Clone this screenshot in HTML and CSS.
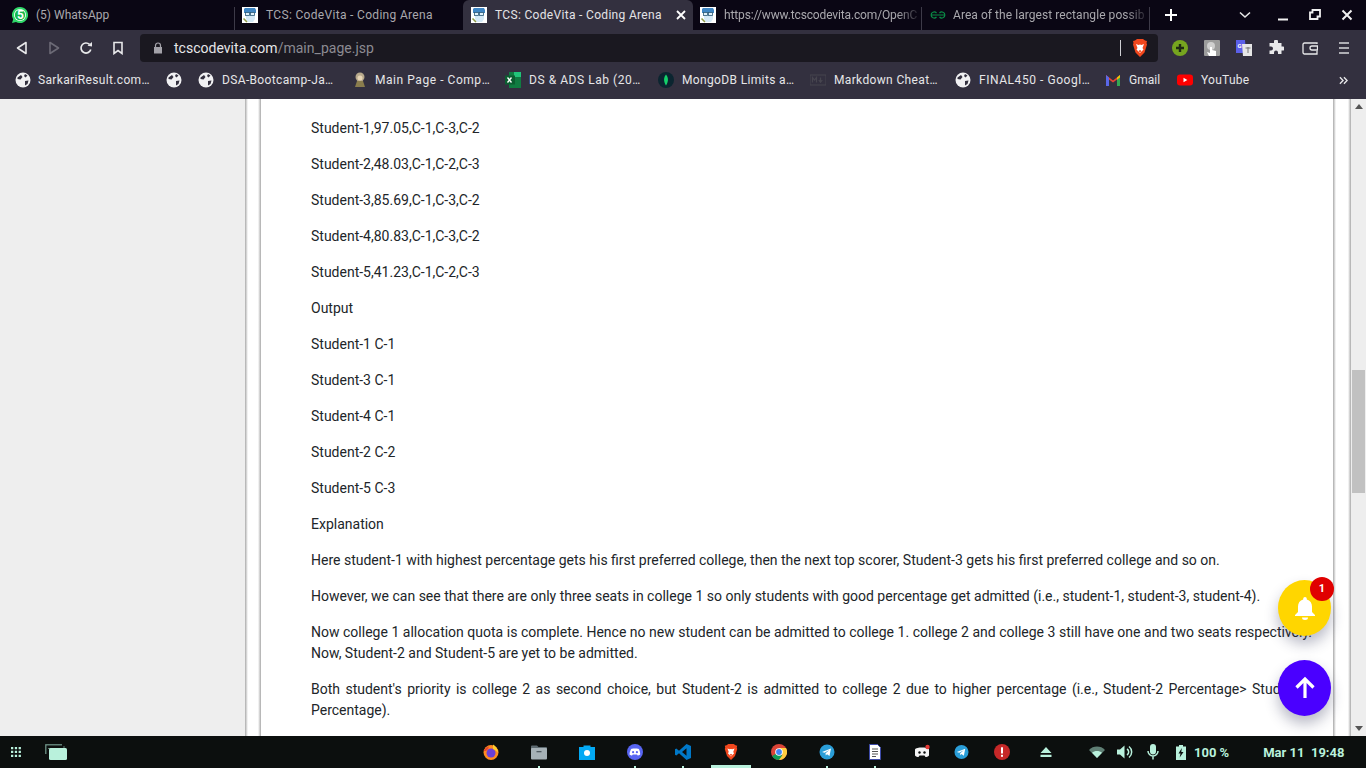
FILE: index.html
```html
<!DOCTYPE html>
<html lang="en">
<head>
<meta charset="utf-8">
<title>TCS: CodeVita - Coding Arena</title>
<link rel="stylesheet" href="styles.css">
</head>
<body>
<svg class="defs" width="0" height="0" aria-hidden="true">
  <defs>
    <symbol id="mascot" viewBox="0 0 16 16">
      <rect width="16" height="16" fill="#fff"/>
      <path d="M3 1h10l1 2v3H2V2z" fill="#3f86c4"/>
      <path d="M4 6h9v6l-2 3H6l-2-3z" fill="#d4e9f7"/>
      <rect x="3.500" y="5.500" width="4" height="3" fill="#dff0fb" stroke="#2c5a78" stroke-width=".8"/>
      <rect x="8.500" y="5.500" width="4" height="3" fill="#dff0fb" stroke="#2c5a78" stroke-width=".8"/>
      <path d="M1.500 11.500l3.500 3.500" stroke="#8d9a48" stroke-width="1.600"/>
    </symbol>
    <symbol id="globe" viewBox="0 0 16 16">
      <circle cx="8" cy="8" r="7.500" fill="#f1f1f3"/>
      <path d="M2.500 5.500L6 3l1.500 2-2 2.500-3-.5zM10 2l2.500 1.500-2 2-1.500-1.500zM10 9l3.500-.5-1 3.500-2.500 1.500z" fill="#33303f"/>
    </symbol>
  </defs>
</svg>
<div class="screen">
  <header class="browser">
    <div class="tabstrip">
      <div class="tab tab-first">
        <svg class="fav" viewBox="0 0 16 16"><path d="M8 0a8 8 0 0 0-6.800 12.200L0 16l4-1.100A8 8 0 1 0 8 0z" fill="#2fd768"/><circle cx="8" cy="8" r="6" fill="#fff"/><circle cx="8" cy="8" r="5.200" fill="#17b84f"/></svg>
        <span class="badge-num">5</span>
        <span class="tab-title">(5) WhatsApp</span>
      </div>
      <div class="tab tab-b"><svg class="fav"><use href="#mascot"/></svg><span class="tab-title tcs">TCS: CodeVita - Coding Arena</span></div>
      <div class="tab tab-active"><svg class="fav"><use href="#mascot"/></svg><span class="tab-title tcs">TCS: CodeVita - Coding Arena</span>
        <svg class="tab-x" viewBox="0 0 10 10"><path d="M1 1l8 8M9 1l-8 8" stroke="#fff" stroke-width="1.800"/></svg>
      </div>
      <div class="tab tab-c"><svg class="fav"><use href="#mascot"/></svg><span class="tab-title fade">https://www.tcscodevita.com/OpenC</span></div>
      <div class="tab tab-d">
        <svg class="fav" viewBox="0 0 16 16"><path d="M6.500 6A3 2.700 0 0 0 1.200 8H14.800A3 2.700 0 0 0 9.500 6M1.200 8A3 2.700 0 0 0 6.500 10M14.800 8A3 2.700 0 0 1 9.500 10" fill="none" stroke="#0a8a45" stroke-width="1.200"/></svg>
        <span class="tab-title fade">Area of the largest rectangle possib</span>
      </div>
      <svg class="plus" viewBox="0 0 14 14"><path d="M7 1v12M1 7h12" stroke="#fff" stroke-width="2"/></svg>
      <svg class="tabmenu" viewBox="0 0 12 8"><path d="M1 1.500l5 4.500 5-4.500" fill="none" stroke="#e6e6e6" stroke-width="1.600"/></svg>
      <div class="winbtns">
        <svg class="win" viewBox="0 0 12 12"><rect x="1" y="9.500" width="10" height="2" fill="#f0f0f0"/></svg>
        <svg class="win" viewBox="0 0 12 12"><path d="M3.500 1h7.500v6.500H8.500V10H1V3.500h2.500z" fill="none" stroke="#f0f0f0" stroke-width="1.800"/></svg>
        <svg class="win" viewBox="0 0 12 12"><path d="M1.500 1.500l9 9M10.500 1.500l-9 9" stroke="#f0f0f0" stroke-width="2"/></svg>
      </div>
    </div>
    <div class="toolbar">
      <div class="navbtns">
        <svg class="nav" viewBox="0 0 14 14"><path d="M11 1.500v11L2.500 7z" fill="none" stroke="#e8e8ea" stroke-width="1.600" stroke-linejoin="round"/></svg>
        <svg class="nav" viewBox="0 0 14 14"><path d="M3 1.500v11L11.500 7z" fill="none" stroke="#6c6a76" stroke-width="1.600" stroke-linejoin="round"/></svg>
        <svg class="nav" viewBox="0 0 14 14"><path d="M11.800 8.500A5 5 0 1 1 10.500 3.400" fill="none" stroke="#e8e8ea" stroke-width="1.700"/><path d="M8.500 4.800L13 5.500V1z" fill="#e8e8ea"/></svg>
        <svg class="nav" viewBox="0 0 14 14"><path d="M3 1.500h8v11L7 9.500l-4 3z" fill="none" stroke="#e8e8ea" stroke-width="1.600"/></svg>
      </div>
      <div class="omnibox">
        <svg class="lock" viewBox="0 0 10 12"><path d="M2.500 5V3.500a2.500 2.500 0 0 1 5 0V5" fill="none" stroke="#a3a2a9" stroke-width="1.200"/><rect x="1" y="5" width="8" height="6.500" fill="#a3a2a9"/></svg>
        <span class="url">tcscodevita.com<span class="url-path">/main_page.jsp</span></span>
        <span class="omni-sep"></span>
        <svg class="brave-s" viewBox="0 0 16 18"><path d="M3 1.500L5 0h6l2 1.500 2 .5-.5 2 .5 1.500-2.500 8L8 18l-4.500-4.500L1 5.500 1.500 4 1 2z" fill="#f1471d"/><path d="M4 5l2.500 1L8 5.500 9.500 6 12 5l-1.500 4 1 1.500L8 14l-3.500-3.500 1-1.500z" fill="#fff"/><path d="M6.500 12L8 11l1.500 1L8 13.500z" fill="#f1471d"/></svg>
      </div>
      <div class="extensions">
        <svg class="ext" viewBox="0 0 16 16"><circle cx="8" cy="8" r="8" fill="#76a51f"/><path d="M8 4v8M4 8h8" stroke="#1f2a14" stroke-width="2.400"/></svg>
        <svg class="ext" viewBox="0 0 16 16"><rect width="16" height="16" rx="1" fill="#9c9c9c"/><circle cx="7" cy="6" r="4" fill="#cfcfcf"/><path d="M6 7h2v3l4 1v5H5l-2-4 3 1z" fill="#fff"/></svg>
        <svg class="ext" viewBox="0 0 16 16"><path d="M0 0h9l1 13H0z" fill="#5b5fe8"/><path d="M6 4h10v12H7z" fill="#e6e6e6"/><text x="1.500" y="7.500" class="ext-g">G</text><path d="M9.500 8h5M12 7v6" stroke="#777" stroke-width="1"/></svg>
        <svg class="ext" viewBox="0 0 16 16"><path d="M6 1.500a2 2 0 0 1 4 0V3h3.500v3.500H15a2 2 0 0 1 0 4h-1.500V14H10v-1.500a2 2 0 0 0-4 0V14H1.500v-3.500H3a2 2 0 0 0 0-4H1.500V3H6z" fill="#e8e8ea"/></svg>
        <svg class="ext ext-shift" viewBox="0 0 16 16"><path d="M15 4V3H2.500A1.500 1.500 0 0 0 1 4.500v8A1.500 1.500 0 0 0 2.500 14H15v-3M15 6H10a2 2 0 0 0 0 4h5.500V6z" fill="none" stroke="#e8e8ea" stroke-width="1.300"/></svg>
        <svg class="ext ext-shift" viewBox="0 0 16 16"><path d="M3 3h10M3 8h10M3 13h10" stroke="#d8d8dc" stroke-width="1.500"/></svg>
      </div>
    </div>
    <nav class="bookmarks">
      <div class="bm bm-tight ls"><svg class="bm-ico"><use href="#globe"/></svg><span>SarkariResult.com…</span></div>
      <div class="bm"><svg class="bm-ico"><use href="#globe"/></svg></div>
      <div class="bm ls"><svg class="bm-ico"><use href="#globe"/></svg><span>DSA-Bootcamp-Ja…</span></div>
      <div class="bm bm-tight lx"><svg class="bm-ico" viewBox="0 0 16 16"><circle cx="8" cy="5" r="4.500" fill="#b7a98c"/><circle cx="8" cy="6" r="2.500" fill="#e8d5b5"/><path d="M3 15l2-6h6l2 6z" fill="#8a7d4d"/></svg><span>Main Page - Comp…</span></div>
      <div class="bm lx"><svg class="bm-ico" viewBox="0 0 16 16"><rect x="4" width="12" height="16" fill="#107c41"/><rect x="9" width="7" height="5" fill="#21c57a"/><rect y="3.500" width="10" height="9" fill="#0b5e30"/><path d="M2.500 5.500l4 5M6.500 5.500l-4 5" stroke="#fff" stroke-width="1.300"/></svg><span>DS &amp; ADS Lab (20…</span></div>
      <div class="bm ls"><svg class="bm-ico" viewBox="0 0 16 16"><circle cx="8" cy="8" r="8" fill="#0b2530"/><path d="M8 2.500c2.600 3 2.600 7 0 11-2.600-4-2.600-8 0-11z" fill="#14d16a"/></svg><span>MongoDB Limits a…</span></div>
      <div class="bm ls"><svg class="bm-ico" viewBox="0 0 16 16"><rect y="3" width="16" height="10" fill="none" stroke="#47454f"/><path d="M2.500 10.500v-5l2 2.500 2-2.500v5M10.500 5.500v4M8.800 8l1.700 2.300L12.300 8" fill="none" stroke="#47454f" stroke-width="1.200"/></svg><span>Markdown Cheat…</span></div>
      <div class="bm lx"><svg class="bm-ico"><use href="#globe"/></svg><span>FINAL450 - Googl…</span></div>
      <div class="bm"><svg class="bm-ico" viewBox="0 0 16 16"><path d="M1 14V3l7 5.500L15 3v11h-3V7.500L8 10.500 4 7.500V14z" fill="#ea4335"/><path d="M1 14V3l3 2.500V14z" fill="#5a68e8"/><path d="M12 14V5.500L15 3v11z" fill="#34a853"/><path d="M12 5.500L15 3v2.500l-3 2.300z" fill="#fbbc04"/></svg><span>Gmail</span></div>
      <div class="bm bm-yt"><svg class="bm-ico" viewBox="0 0 16 16"><rect y="2.500" width="16" height="11" rx="3" fill="#f00"/><path d="M6.500 5.800v4.400L10.300 8z" fill="#fff"/></svg><span>YouTube</span></div>
      <svg class="more" viewBox="0 0 10 10"><path d="M1 1.500L4.500 5 1 8.500M5.500 1.500L9 5 5.500 8.500" fill="none" stroke="#e8e8ea" stroke-width="1.500"/></svg>
    </nav>
  </header>

  <main class="viewport">
    <div class="gutter"></div>
    <div class="shell">
      <article class="sheet">
        <p>Student-1,97.05,C-1,C-3,C-2</p>
        <p>Student-2,48.03,C-1,C-2,C-3</p>
        <p>Student-3,85.69,C-1,C-3,C-2</p>
        <p>Student-4,80.83,C-1,C-3,C-2</p>
        <p>Student-5,41.23,C-1,C-2,C-3</p>
        <p>Output</p>
        <p>Student-1 C-1</p>
        <p>Student-3 C-1</p>
        <p>Student-4 C-1</p>
        <p>Student-2 C-2</p>
        <p>Student-5 C-3</p>
        <p>Explanation</p>
        <p>Here student-1 with highest percentage gets his first preferred college, then the next top scorer, Student-3 gets his first preferred college and so on.</p>
        <p>However, we can see that there are only three seats in college 1 so only students with good percentage get admitted (i.e., student-1, student-3, student-4).</p>
        <p>Now college 1 allocation quota is complete. Hence no new student can be admitted to college 1. college 2 and college 3 still have one and two seats respectively. Now, Student-2 and Student-5 are yet to be admitted.</p>
        <p>Both student's priority is college 2 as second choice, but Student-2 is admitted to college 2 due to higher percentage (i.e., Student-2 Percentage&gt; Student-5 Percentage).</p>
      </article>
    </div>
    <div class="scrollbar">
      <svg class="sb-arrow" viewBox="0 0 8 5"><path d="M4 0l4 5H0z" fill="#555"/></svg>
      <svg class="sb-arrow" viewBox="0 0 8 5"><path d="M4 5l4-5H0z" fill="#555"/></svg>
      <div class="sb-thumb"></div>
    </div>
    <div class="fab fab-bell">
      <svg class="fab-ico" viewBox="0 0 22 24"><path d="M11 1a1.800 1.800 0 0 1 1.800 1.800v.6C16.200 4.300 18 7 18 10.500V16l3 3v1H1v-1l3-3v-5.500C4 7 5.800 4.300 9.200 3.400v-.6A1.800 1.800 0 0 1 11 1z" fill="#fff"/><path d="M8 21.500h6a3 2.500 0 0 1-6 0z" fill="#fff"/></svg>
      <span class="fab-badge">1</span>
    </div>
    <div class="fab fab-up">
      <svg class="fab-ico" viewBox="0 0 22 24"><path d="M11 22V3M2.500 11.500L11 3l8.500 8.500" fill="none" stroke="#fff" stroke-width="3.200"/></svg>
    </div>
  </main>

  <footer class="taskbar">
    <div class="tb-left">
      <svg class="apps" viewBox="0 0 11 11"><path d="M0 0h2.500v2.500H0zM4.200 0h2.500v2.500H4.200zM8.400 0h2.500v2.500H8.400zM0 4.200h2.500v2.500H0zM4.200 4.200h2.500v2.500H4.200zM8.400 4.200h2.500v2.500H8.400zM0 8.400h2.500v2.500H0zM4.200 8.400h2.500v2.500H4.200zM8.400 8.400h2.500v2.500H8.400z" fill="#b9f1dc"/></svg>
      <svg class="workspace" viewBox="0 0 22 16"><path d="M.5 10V2A1.500 1.500 0 0 1 2 .5h15" fill="none" stroke="#5f7f74" stroke-width="2"/><path d="M3 4.500h16V2" fill="none" stroke="#5f7f74" stroke-width="1"/><rect x="4" y="4" width="18" height="12" rx="1.500" fill="#b9f1dc"/></svg>
    </div>
    <div class="dock">
      <div class="dock-cell"><svg class="dk" viewBox="0 0 16 16"><circle cx="8" cy="8.500" r="7.500" fill="#ff8a1f"/><circle cx="8" cy="9" r="4.500" fill="#6b3fd6"/><path d="M10 .5c3 2 5 4.500 5 8l-3-2.500-2-1z" fill="#ffcc2e"/><path d="M.8 7C2 4 4 2.500 6 2.500L5 5 3 7z" fill="#e8452c"/></svg></div>
      <div class="dock-cell dot"><svg class="dk" viewBox="0 0 16 16"><path d="M0 2.500A1 1 0 0 1 1 1.500h5L7.500 3H15a1 1 0 0 1 1 1v1H0z" fill="#5d6a70"/><rect y="4" width="16" height="11.500" rx="1" fill="#a6b1b6"/><rect x="5.500" y="7" width="5" height="1.300" fill="#4f5a60"/></svg></div>
      <div class="dock-cell"><svg class="dk" viewBox="0 0 16 16"><path d="M0 3h4.500V1.500h7V3H16v13H0z" fill="#03a9f4"/><circle cx="8" cy="9" r="3" fill="#fff"/></svg></div>
      <div class="dock-cell dot"><svg class="dk" viewBox="0 0 16 16"><circle cx="8" cy="8" r="8" fill="#5865f2"/><path d="M4 5.200C5.500 4.300 6.500 4.500 6.500 4.500h3s1 -.2 2.500 .7c1 1.800 1.200 3.800 1.200 5.300-1 .8-2 1-2.500 1l-.7-1H5.800l-.8 1c-.5 0-1.500-.2-2.500-1 0-1.500.5-3.500 1.500-5.300z" fill="#fff"/><circle cx="6.100" cy="8.200" r="1.100" fill="#5865f2"/><circle cx="9.900" cy="8.200" r="1.100" fill="#5865f2"/></svg></div>
      <div class="dock-cell dot"><svg class="dk" viewBox="0 0 16 16"><path d="M11.500 0L16 2v12l-4.500 2L4 9.300 1.300 11.500 0 10.800V5.200l1.300-.7L4 6.700zM11.500 4.300L7 8l4.500 3.700z" fill="#0078c8"/></svg></div>
      <div class="dock-cell active"><svg class="dk" viewBox="0 0 16 18"><path d="M3 1.500L5 0h6l2 1.500 2 .5-.5 2 .5 1.500-2.500 8L8 18l-4.500-4.500L1 5.500 1.500 4 1 2z" fill="#f1471d"/><path d="M4 5l2.500 1L8 5.500 9.500 6 12 5l-1.500 4 1 1.500L8 14l-3.500-3.500 1-1.500z" fill="#fff"/><path d="M6.500 12L8 11l1.500 1L8 13.500z" fill="#f1471d"/></svg></div>
      <div class="dock-cell"><svg class="dk" viewBox="0 0 16 16"><circle cx="8" cy="8" r="8" fill="#db4437"/><path d="M8 8L1.100 12A8 8 0 0 0 8 16l3.500-4z" fill="#0f9d58"/><path d="M8 4h7a8 8 0 0 1-7 12l3.500-5z" fill="#ffcd40"/><circle cx="8" cy="8" r="3.800" fill="#fff"/><circle cx="8" cy="8" r="2.900" fill="#4285f4"/></svg></div>
      <div class="dock-cell dot"><svg class="dk" viewBox="0 0 16 16"><circle cx="8" cy="8" r="7.500" fill="#2a9ed8"/><path d="M3 8l9-3.500-1.500 7.500L8 10.200 6.800 11.500 6.500 9.300l4-3.300-5 2.800z" fill="#fff"/></svg></div>
      <div class="dock-cell dot"><svg class="dk" viewBox="0 0 12 16"><path d="M.5.500h8l3 3v12H.5z" fill="#fff" stroke="#3d4aa8"/><path d="M3 5h6M3 7.500h6M3 10h6M3 12.500h4" stroke="#555" stroke-width="1"/></svg></div>
    </div>
    <div class="tray">
      <svg class="tr tr-1" viewBox="0 0 16 16"><path d="M1 5.500C1.500 4 5 3.500 8 3.500s6.500.5 7 2v6c-1 1-2.500 1.500-3.500 1.500l-1-1.500h-5L4.500 13C3.500 13 2 12.500 1 11.500z" fill="#f4f4f4"/><circle cx="5.500" cy="8.500" r="1.200" fill="#0c0f0e"/><circle cx="10.500" cy="8.500" r="1.200" fill="#0c0f0e"/><circle cx="13.500" cy="3" r="2.200" fill="#e53935"/></svg>
      <svg class="tr tr-2" viewBox="0 0 16 16"><circle cx="8" cy="8" r="7.500" fill="#2a9ed8"/><path d="M3 8l9-3.500-1.500 7.500L8 10.200 6.800 11.500 6.500 9.300l4-3.300-5 2.800z" fill="#fff"/></svg>
      <svg class="tr tr-3" viewBox="0 0 16 16"><circle cx="8" cy="8" r="8" fill="#c62828"/><rect x="7" y="3.300" width="2" height="6.200" fill="#fff"/><rect x="7" y="10.800" width="2" height="2" fill="#fff"/></svg>
      <svg class="tr tr-4" viewBox="0 0 12 12"><path d="M6 1l5.500 6H.5z M.5 8.700h11v2.300H.5z" fill="#b9f1dc"/></svg>
      <svg class="tr tr-5" viewBox="0 0 16 12"><path d="M0 4C2 1.500 5 .5 8 .5S14 1.500 16 4l-8 8z" fill="#5f7f74"/><path d="M3 6.800C4.300 5.500 6 5 8 5s3.700.5 5 1.800L8 12z" fill="#b9f1dc"/></svg>
      <svg class="tr tr-6" viewBox="0 0 16 16"><path d="M0 5.500h3L7.500 1.500v13L3 10.500H0z" fill="#b9f1dc"/><path d="M10 5a3.500 3.500 0 0 1 0 6M12 2.500a7 7 0 0 1 0 11" fill="none" stroke="#b9f1dc" stroke-width="1.500"/></svg>
      <svg class="tr tr-7" viewBox="0 0 12 16"><rect x="3" y="0" width="6" height="10.500" rx="3" fill="#b9f1dc"/><path d="M1 7a5 5 0 0 0 10 0M6 12v3.500" fill="none" stroke="#b9f1dc" stroke-width="1.500"/></svg>
      <svg class="tr tr-8" viewBox="0 0 10 15"><path d="M3 0h4v1.500h3V15H0V1.500h3z" fill="#b9f1dc"/><path d="M5.800 3L2.500 8.500h2L3.700 12.500 7.500 7H5.300z" fill="#0c0f0e"/></svg>
      <span class="pct">100 %</span>
      <span class="clock">Mar 11&nbsp; 19:48</span>
    </div>
  </footer>
</div>
</body>
</html>
```
FILE: styles.css
```css
* { box-sizing: border-box; }
html, body { margin: 0; padding: 0; height: 100%; overflow: hidden; }
body { font-family: Roboto, "Liberation Sans", sans-serif; }
.defs { position: absolute; }
svg { display: block; flex: none; }
.screen { width: 1366px; height: 768px; display: flex; flex-direction: column; overflow: hidden; }

/* browser */
.browser { height: 99px; background: #33303f; flex: none; }
.tabstrip { height: 30px; background: #0a0614; display: flex; align-items: stretch; position: relative; }
.tab { position: relative; display: flex; align-items: center; font-size: 12px; color: #a9a8ad; white-space: nowrap; overflow: hidden; }
.tab::after { content: ""; position: absolute; right: 0; top: 7px; height: 23px; width: 1px; background: #3d3a48; }
.fav { width: 16px; height: 16px; margin-right: 8px; }
.tab-first { width: 235px; padding-left: 12px; }
.tab-b { width: 228px; padding-left: 7px; }
.tab-b::after { display: none; }
.tab-active { width: 230px; padding-left: 8px; background: #33303f; color: #e3e3e6; border-radius: 6px 6px 0 0; }
.tab-active::after { display: none; }
.tab-c { width: 229px; padding-left: 7px; }
.tab-d { width: 228px; padding-left: 8px; }
.tab-title { display: block; }
.tcs { letter-spacing: .32px; }
.fade { width: 193px; overflow: hidden; letter-spacing: -.14px; -webkit-mask-image: linear-gradient(to right, #000 calc(100% - 20px), rgba(0, 0, 0, .2)); mask-image: linear-gradient(to right, #000 calc(100% - 20px), rgba(0, 0, 0, .2)); }
.tab-d .fav { margin-right: 7px; }
.tab-d .fade { width: 192px; letter-spacing: .06px; }
.badge-num { position: absolute; left: 17px; top: 8px; font-size: 12px; font-weight: 700; color: #fff; line-height: 14px; }
.tab-x { width: 10px; height: 10px; position: absolute; left: 213px; top: 10px; }
.plus { width: 14px; height: 14px; margin: 8px 0 0 14px; }
.tabmenu { width: 12px; height: 8px; margin: 11px 0 0 61px; }
.winbtns { display: flex; gap: 20px; margin: 9px 0 0 26px; }
.win { width: 12px; height: 12px; }

.toolbar { height: 36px; display: flex; align-items: center; }
.navbtns { display: flex; gap: 18px; width: 140px; padding-left: 15px; }
.nav { width: 14px; height: 14px; }
.omnibox { width: 1018px; height: 28px; background: #1a1820; border-radius: 4px; display: flex; align-items: center; padding-left: 13px; }
.lock { width: 10px; height: 12px; margin-right: 11px; }
.url { font-size: 14px; color: #e6e6e8; letter-spacing: .02px; flex: 1; }
.url-path { color: #8c8b92; }
.omni-sep { width: 1px; height: 16px; background: #d0d0d4; margin-right: 11px; }
.brave-s { width: 16px; height: 18px; margin-right: 10px; }
.extensions { display: flex; gap: 16px; padding-left: 14px; }
.ext { width: 16px; height: 16px; }
.ext-shift { margin-left: 2px; }
.ext-g { font-size: 6px; font-weight: 700; fill: #fff; }

.bookmarks { height: 33px; padding-left: 15px; display: grid; grid-template-columns: 151px 32px 154px 153px 153px 152px 145px 150px 72px 162px 14px; align-items: center; padding-bottom: 5px; }
.bm { display: flex; align-items: center; gap: 8px; font-size: 12px; color: #e6e6e8; white-space: nowrap; }
.bm-tight { gap: 7px; }
.ls { letter-spacing: .35px; }
.lx { letter-spacing: .55px; }
.bm-yt { letter-spacing: .25px; }
.bm-ico { width: 16px; height: 16px; }
.more { width: 9px; height: 9px; }

/* page */
.viewport { flex: 1; min-height: 0; display: flex; background: #eee; position: relative; overflow: hidden; }
.gutter { width: 245px; flex: none; }
.shell {
  width: 1106px; flex: none; padding: 0 15px 0 13px; overflow: hidden;
  background-color: #fff;
  background-image: linear-gradient(to right, #aaa, #fff), linear-gradient(to left, #aaa, #fff);
  background-size: 3px 100%, 3px 100%;
  background-position: left top, right top;
  background-repeat: no-repeat;
}
.sheet {
  padding: 18.500px 24px 0 53px; font-size: 14px; line-height: 21px; color: #212529; text-align: justify; height: 100%;
  background-color: #fff;
  background-image: linear-gradient(to right, #fff, #aaa), linear-gradient(to left, #fff, #aaa);
  background-size: 3px 100%, 3px 100%;
  background-position: left top, right top;
  background-repeat: no-repeat;
}
.sheet p { margin: 0 0 15px; }
.scrollbar { width: 15px; flex: none; background: #eee; position: relative; display: flex; flex-direction: column; justify-content: space-between; align-items: center; padding: 5px 0; }
.sb-arrow { width: 8px; height: 5px; }
.sb-thumb { position: absolute; left: 1px; right: 1px; top: 271px; height: 123px; background: #c1c1c1; }

.fab { position: absolute; width: 53px; height: 56px; border-radius: 50%; display: flex; align-items: center; justify-content: center; box-shadow: 0 8px 14px rgba(40, 45, 80, .32); left: 1278px; }
.fab-bell { top: 481px; background: #ffd600; }
.fab-up { top: 561px; background: #4a00ff; }
.fab-ico { width: 22px; height: 24px; }
.fab-badge { position: absolute; left: 32px; top: -3px; width: 24px; height: 24px; border-radius: 50%; background: #e00000; color: #fff; font-size: 11px; font-weight: 700; line-height: 24px; text-align: center; }

/* taskbar */
.taskbar { height: 32px; flex: none; background: #0c0f0e; display: flex; align-items: center; position: relative; }
.tb-left { width: 467px; display: flex; align-items: center; padding-left: 11px; }
.apps { width: 10px; height: 10px; }
.workspace { width: 22px; height: 16px; margin-left: 24px; }
.dock { display: flex; width: 432px; height: 32px; }
.dock-cell { width: 48px; display: flex; align-items: center; justify-content: center; position: relative; }
.dk { width: 16px; height: 16px; }
.dot::after { content: ""; position: absolute; bottom: 0; left: 23px; width: 2px; height: 2px; background: #b9f1dc; }
.active::after { content: ""; position: absolute; bottom: 0; left: 4px; width: 40px; height: 3px; background: #b9f1dc; }
.tray { display: flex; align-items: center; }
.tr { height: 16px; width: 16px; }
.tr-1 { margin-left: 15px; }
.tr-2 { margin-left: 24px; width: 15px; }
.tr-3 { margin-left: 25px; }
.tr-4 { margin-left: 30px; width: 12px; height: 12px; }
.tr-5 { margin-left: 37px; height: 12px; }
.tr-6 { margin-left: 12px; }
.tr-7 { margin-left: 14px; width: 12px; }
.tr-8 { margin-left: 17px; width: 10px; height: 15px; }
.pct { margin-left: 8px; font-size: 13px; font-weight: 700; color: #b9f1dc; }
.clock { margin-left: 34px; font-size: 13px; font-weight: 700; color: #b9f1dc; white-space: nowrap; }
```
